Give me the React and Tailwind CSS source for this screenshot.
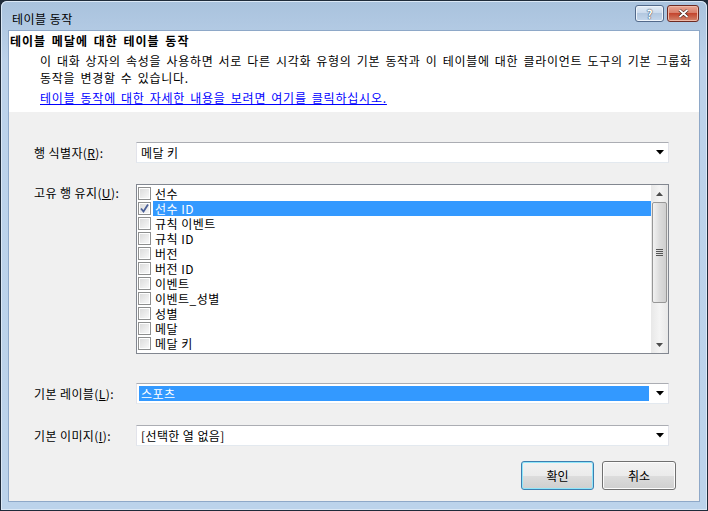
import React from 'react';

const FONT = "font-['Noto_Sans_CJK_KR','Liberation_Sans',sans-serif]";

const columns = [
  { name: '선수', checked: false },
  { name: '선수 ID', checked: true },
  { name: '규칙 이벤트', checked: false },
  { name: '규칙 ID', checked: false },
  { name: '버전', checked: false },
  { name: '버전 ID', checked: false },
  { name: '이벤트', checked: false },
  { name: '이벤트_성별', checked: false },
  { name: '성별', checked: false },
  { name: '메달', checked: false },
  { name: '메달 키', checked: false },
];

function Label({ text, keyChar }) {
  return (
    <span className="text-[12px] leading-[15px] tracking-[0.4px] text-black whitespace-nowrap">
      {text}(<span className="underline">{keyChar}</span>):
    </span>
  );
}

function DropArrow() {
  return (
    <svg width="8" height="5" viewBox="0 0 8 5" className="shrink-0">
      <path d="M0 0h8L4 4.5z" fill="#000" />
    </svg>
  );
}

function Combo({ value, selected }) {
  return (
    <div className="h-[21px] flex items-center bg-white border border-[#abadb3] border-l-[#e2e3ea] border-r-[#e2e3ea] border-b-[#e3e9ef] pl-[2px] pr-[4px]">
      <div
        className={`flex-1 h-[15px] flex items-center pl-[2px] tracking-[0.4px] ${
          selected ? 'bg-[#3399ff] text-white' : 'text-black'
        }`}
      >
        {value}
      </div>
      <div className="w-[15px] flex justify-end">
        <DropArrow />
      </div>
    </div>
  );
}

function CheckBox({ checked }) {
  return (
    <div className="w-[13px] h-[13px] border border-[#8e8f8f] bg-white p-[1px] shrink-0">
      <div className="w-full h-full bg-gradient-to-br from-[#dcdcdc] to-[#f8f8f8] relative">
        {checked && (
          <svg width="11" height="11" viewBox="0 0 11 11" className="absolute -left-[1px] -top-[1px]">
            <path d="M2 5.5l2.5 3L9 1.5" stroke="#4a5f97" strokeWidth="1.8" fill="none" />
          </svg>
        )}
      </div>
    </div>
  );
}

function ScrollBar() {
  return (
    <div className="w-[17px] h-full bg-gradient-to-r from-[#e8e8e8] via-[#f4f4f4] to-[#e8e8e8] flex flex-col items-center">
      <div className="h-[17px] w-full flex items-center justify-center">
        <svg width="7" height="4" viewBox="0 0 7 4">
          <path d="M0 4h7L3.5 0z" fill="#4d4d4d" />
        </svg>
      </div>
      <div className="w-[15px] h-[101px] rounded-[2px] border border-[#979797] bg-gradient-to-r from-[#f2f2f2] via-[#dcdcdc] to-[#cfcfcf] flex flex-col items-center justify-center gap-[1px]">
        <div className="w-[7px] h-[1px] bg-[#555]" />
        <div className="w-[7px] h-[1px] bg-[#555]" />
        <div className="w-[7px] h-[1px] bg-[#555]" />
        <div className="w-[7px] h-[1px] bg-[#555]" />
      </div>
      <div className="flex-1" />
      <div className="h-[17px] w-full flex items-center justify-center">
        <svg width="7" height="4" viewBox="0 0 7 4">
          <path d="M0 0h7L3.5 4z" fill="#4d4d4d" />
        </svg>
      </div>
    </div>
  );
}

function ListBox() {
  return (
    <div className="h-[170px] border border-[#828790] bg-white flex">
      <div className="flex-1 flex flex-col pt-[1px] pl-[1px]">
        {columns.map((c) => (
          <div key={c.name} className="h-[15px] flex items-center">
            <CheckBox checked={c.checked} />
            <div
              className={`ml-[2px] flex-1 h-[15px] flex items-center pl-[2px] tracking-[0.5px] ${
                c.checked ? 'bg-[#3399ff] text-white' : 'text-black'
              }`}
            >
              {c.name}
            </div>
          </div>
        ))}
      </div>
      <ScrollBar />
    </div>
  );
}

function Button({ children, isDefault }) {
  return (
    <div
      className={`h-[29px] rounded-[3px] border flex items-center justify-center text-black bg-[linear-gradient(#f2f2f2,#ebebeb_50%,#dddddd_50%,#cfcfcf)] ${
        isDefault
          ? 'w-[73px] border-[#3c7fb1] shadow-[inset_0_0_0_1px_#8fe6fa]'
          : 'w-[74px] border-[#707070] shadow-[inset_0_0_0_1px_#fcfcfc]'
      }`}
    >
      {children}
    </div>
  );
}

export default function App() {
  return (
    <div className={`w-[708px] h-[511px] ${FONT} text-[12px] leading-[15px] bg-[#1f2b3a] p-[1px]`}>
      <div className="w-full h-full flex flex-col bg-[linear-gradient(#a9c2dd,#bcd2ea_60px,#bcd3eb)] shadow-[inset_0_0_0_1px_#dbe8f6] rounded-t-[6px]">
        {/* Title bar */}
        <div className="h-[29px] flex items-center pl-[11px] pr-[8px] shrink-0">
          <span className="text-black pt-[5px] tracking-[0.5px]">테이블 동작</span>
          <div className="flex-1" />
          <div className="flex gap-[3px] -mt-[4px]">
            <div className="w-[29px] h-[17px] rounded-[3px] border border-[#52698a] bg-[linear-gradient(#e3ecf6,#c9d9ec_50%,#b3c8e0_50%,#c5d7ec)] flex items-center justify-center shadow-[inset_0_0_0_1px_#eef4fb]">
              <span className="text-[12px] leading-none font-bold text-white [text-shadow:0_0_1px_#25364f,0_0_1px_#25364f]">?</span>
            </div>
            <div className="w-[32px] h-[17px] rounded-[3px] border border-[#6d2a22] bg-[linear-gradient(#e8a593,#d77b66_50%,#c4462f_50%,#d2866d)] flex items-center justify-center shadow-[inset_0_0_0_1px_#efb9a8]">
              <svg width="11" height="9" viewBox="0 0 11 9">
                <path d="M1.5 1l8 7M9.5 1l-8 7" stroke="#3a1a14" strokeWidth="3" />
                <path d="M1.5 1l8 7M9.5 1l-8 7" stroke="#fff" strokeWidth="1.8" />
              </svg>
            </div>
          </div>
        </div>

        {/* Client area */}
        <div className="flex-1 mx-[7px] mb-[8px] flex flex-col border border-[#8ea8c8] bg-[#f0f0f0]">
          {/* Header */}
          <div className="h-[81px] bg-white shrink-0 flex flex-col">
            <div className="pl-[1px] pt-[2px] font-bold text-black leading-[16px] tracking-[1px] [word-spacing:2px]">
              테이블 메달에 대한 테이블 동작
            </div>
            <div className="pl-[31px] pt-[3px] text-black leading-[17px] tracking-[0.7px] [word-spacing:1.8px]">
              이 대화 상자의 속성을 사용하면 서로 다른 시각화 유형의 기본 동작과 이 테이블에 대한 클라이언트 도구의 기본 그룹화
              <br />
              동작을 변경할 수 있습니다.
            </div>
            <div className="pl-[31px] pt-[3px] leading-[17px] tracking-[0.8px] [word-spacing:1.5px] text-[#0000ff]">
              <span className="underline">테이블 동작에 대한 자세한 내용을 보려면 여기를 클릭하십시오.</span>
            </div>
          </div>

          {/* Form */}
          <div className="flex-1 flex flex-col pt-[30px] pr-[30px]">
            <div className="flex items-center">
              <div className="w-[127px] pl-[25px]">
                <Label text="행 식별자" keyChar="R" />
              </div>
              <div className="flex-1">
                <Combo value="메달 키" />
              </div>
            </div>

            <div className="flex items-start mt-[21px]">
              <div className="w-[127px] pl-[25px] pt-[1px]">
                <Label text="고유 행 유지" keyChar="U" />
              </div>
              <div className="flex-1">
                <ListBox />
              </div>
            </div>

            <div className="flex items-center mt-[29px]">
              <div className="w-[127px] pl-[25px]">
                <Label text="기본 레이블" keyChar="L" />
              </div>
              <div className="flex-1">
                <Combo value="스포츠" selected />
              </div>
            </div>

            <div className="flex items-center mt-[21px]">
              <div className="w-[127px] pl-[25px]">
                <Label text="기본 이미지" keyChar="I" />
              </div>
              <div className="flex-1">
                <Combo value="[선택한 열 없음]" />
              </div>
            </div>

            <div className="flex justify-end gap-[8px] mt-[15px] -mr-[7px]">
              <Button isDefault>확인</Button>
              <Button>취소</Button>
            </div>
          </div>
        </div>
      </div>
    </div>
  );
}
